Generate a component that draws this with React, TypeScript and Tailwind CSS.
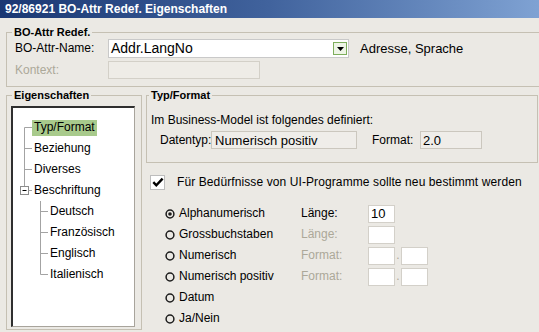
import React from "react";

type Kind = "first" | "mid" | "parent" | "child" | "last";

const treeItems: { label: string; kind: Kind; selected?: boolean }[] = [
	{ label: "Typ/Format", kind: "first", selected: true },
	{ label: "Beziehung", kind: "mid" },
	{ label: "Diverses", kind: "mid" },
	{ label: "Beschriftung", kind: "parent" },
	{ label: "Deutsch", kind: "child" },
	{ label: "Französisch", kind: "child" },
	{ label: "Englisch", kind: "child" },
	{ label: "Italienisch", kind: "last" },
];

const line = "#a3a3a3";

// connector lines of the tree, one small drawing per row
function Connector({ kind }: { kind: Kind }) {
	if (kind === "child" || kind === "last") {
		return (
			<svg width="35" height="21" className="shrink-0">
				<line x1="27.5" y1="0" x2="27.5" y2={kind === "last" ? 10.5 : 21} stroke={line} />
				<line x1="27.5" y1="10.5" x2="35" y2="10.5" stroke={line} />
			</svg>
		);
	}
	if (kind === "parent") {
		return (
			<svg width="19" height="21" className="shrink-0">
				<line x1="11.5" y1="0" x2="11.5" y2="6.5" stroke={line} />
				<rect x="7.5" y="6.5" width="8" height="8" fill="#fff" stroke="#8c8c8c" />
				<line x1="9.5" y1="10.5" x2="13.5" y2="10.5" stroke="#000" />
				<line x1="15.5" y1="10.5" x2="19" y2="10.5" stroke={line} />
			</svg>
		);
	}
	return (
		<svg width="19" height="21" className="shrink-0">
			<line x1="11.5" y1={kind === "first" ? 10.5 : 0} x2="11.5" y2="21" stroke={line} />
			<line x1="11.5" y1="10.5" x2="19" y2="10.5" stroke={line} />
		</svg>
	);
}

function Radio({ checked }: { checked?: boolean }) {
	return (
		<svg width="10" height="10" className="shrink-0">
			<circle cx="5" cy="5" r="3.9" fill="none" stroke="#1c1c1c" strokeWidth="1.5" />
			{checked ? <circle cx="5" cy="5" r="1.8" fill="#1c1c1c" /> : null}
		</svg>
	);
}

const box = "h-[18px] bg-white border border-[#d3d0c9]";
const grey = "text-[#aca899]";

const radios: { label: string; checked?: boolean; field?: "len" | "lenOff" | "fmt" }[] = [
	{ label: "Alphanumerisch", checked: true, field: "len" },
	{ label: "Grossbuchstaben", field: "lenOff" },
	{ label: "Numerisch", field: "fmt" },
	{ label: "Numerisch positiv", field: "fmt" },
	{ label: "Datum" },
	{ label: "Ja/Nein" },
];

export default function App() {
	return (
		<div className="w-[539px] h-[332px] overflow-hidden flex flex-col bg-[#ebe9e4] text-[12px] leading-[15px] text-black font-['Liberation_Sans',Arial,sans-serif]">
			<div className="h-[18px] shrink-0 flex items-center pl-[5px] bg-linear-to-r from-[#1a3773] via-[#41639d] to-[#7fa2d3] text-white font-bold">
				92/86921 BO-Attr Redef. Eigenschaften
			</div>

			<fieldset className="mt-[8px] ml-[6px] w-[540px] shrink-0 border border-[#c5c0b3] pb-[7px]">
				<legend className="ml-[5px] px-[2px] font-bold text-[11px] leading-[13px]">
					BO-Attr Redef.
				</legend>
				<div className="flex items-center h-[19px]">
					<span className="w-[101px] pl-[8px]">BO-Attr-Name:</span>
					<div className="w-[241px] h-[19px] flex items-center bg-white border border-[#c9c9c9] pl-[2px] text-[14px]">
						<span>Addr.LangNo</span>
						<span className="ml-auto mr-[1px] w-[14px] h-[13px] flex items-center justify-center border border-[#7eae5c] bg-[#eef5e6]">
							<svg width="7" height="4">
								<path d="M0 0 L7 0 L3.5 4 Z" fill="#000" />
							</svg>
						</span>
					</div>
					<span className="ml-[11px] text-[13px]">Adresse, Sprache</span>
				</div>
				<div className="flex items-center h-[18px] mt-[3px]">
					<span className={`w-[101px] pl-[8px] ${grey}`}>Kontext:</span>
					<div className="w-[152px] h-[18px] bg-[#eeece7] border border-[#d3d0c8]" />
				</div>
			</fieldset>

			<div className="flex items-start mt-[2px]">
				<fieldset className="ml-[6px] w-[136px] border border-[#c5c0b3] pb-[2px]">
					<legend className="ml-[5px] px-[2px] font-bold text-[11px] leading-[13px]">
						Eigenschaften
					</legend>
					<div className="mt-[4px] ml-[4px] w-[124px] h-[221px] bg-white border border-[#a8a49c] border-t-2 border-l-2 border-t-[#2f2f2f] border-l-[#2f2f2f] pt-[9px]">
						{treeItems.map((item) => (
							<div key={item.label} className="flex items-center h-[21px]">
								<Connector kind={item.kind} />
								<span
									className={`h-[16px] flex items-center px-[2px] ${
										item.selected ? "bg-[#a8ca8c]" : ""
									}`}
								>
									{item.label}
								</span>
							</div>
						))}
					</div>
				</fieldset>

				<div className="ml-[4px] w-[392px] flex flex-col">
					<fieldset className="border border-[#c5c0b3] pb-[13px]">
						<legend className="ml-[2px] px-[2px] font-bold text-[11px] leading-[13px]">
							Typ/Format
						</legend>
						<div className="pt-[11px] pl-[4px]">
							<div>Im Business-Model ist folgendes definiert:</div>
							<div className="flex items-center h-[18px] mt-[3px] ml-[9px]">
								<span className="w-[51px]">Datentyp:</span>
								<div className="w-[146px] h-[18px] flex items-center pl-[3px] text-[13px] bg-[#efede9] border border-[#cbc7be]">
									Numerisch positiv
								</div>
								<span className="ml-[15px] w-[48px]">Format:</span>
								<div className="w-[62px] h-[18px] flex items-center pl-[2px] text-[13px] bg-[#efede9] border border-[#cbc7be]">
									2.0
								</div>
							</div>
						</div>
					</fieldset>

					<div className="pt-[12px] pl-[4px]">
						<div className="flex items-center h-[15px]">
							<span className="w-[15px] h-[15px] flex items-center justify-center bg-white border border-[#bdbdbd]">
								<svg width="12" height="11">
									<path d="M1.3 5.2 L4.3 8.3 L10.6 1.6" fill="none" stroke="#000" strokeWidth="2.4" />
								</svg>
							</span>
							<span className="ml-[12px] tracking-[0.1px]">
								Für Bedürfnisse von UI-Programme sollte neu bestimmt werden
							</span>
						</div>

						<div className="mt-[13px] ml-[15px]">
							{radios.map((r) => (
								<div key={r.label} className="flex items-center h-[21px]">
									<div className="w-[136px] flex items-center gap-[4px]">
										<Radio checked={r.checked} />
										<span>{r.label}</span>
									</div>
									{r.field === "len" ? (
										<>
											<span className="w-[67px]">Länge:</span>
											<div className={`w-[27px] ${box} flex items-center pl-[2px] text-[13px]`}>10</div>
										</>
									) : null}
									{r.field === "lenOff" ? (
										<>
											<span className={`w-[67px] ${grey}`}>Länge:</span>
											<div className={`w-[27px] ${box}`} />
										</>
									) : null}
									{r.field === "fmt" ? (
										<>
											<span className={`w-[67px] ${grey}`}>Format:</span>
											<div className={`w-[27px] ${box}`} />
											<span className={`w-[6px] text-center ${grey}`}>.</span>
											<div className={`w-[27px] ${box}`} />
										</>
									) : null}
								</div>
							))}
						</div>
					</div>
				</div>
			</div>
		</div>
	);
}
